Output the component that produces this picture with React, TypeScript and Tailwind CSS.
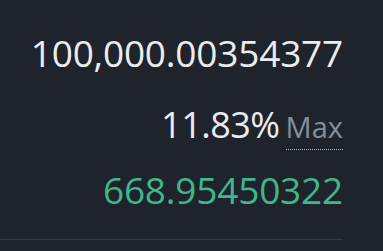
import React from 'react';

const App: React.FC = () => {
  return (
    <div className="w-[383px] h-[251px] bg-[#1f232c] overflow-hidden" style={{ fontFamily: "'Open Sans', sans-serif" }}>
      <div className="w-[343px] flex flex-col items-end border-b border-[#363b45] pt-[28px] pb-[24px]">
        <div className="text-[37px] leading-[50px] text-[#eaecef] tracking-[-0.2px]">100,000.00354377</div>
        <div className="flex items-baseline mt-[24px]">
          <span className="text-[36px] leading-[46px] text-[#eaecef] tracking-[-0.5px]">11.83%</span>
          <span className="ml-[6px] text-[29px] leading-[44px] text-[#848e9c] border-b border-dotted border-[#b7bdc6]">Max</span>
        </div>
        <div className="text-[37px] leading-[50px] text-[#3fb68b] mt-[15px] tracking-[-0.2px]">668.95450322</div>
      </div>
    </div>
  );
};

export default App;
